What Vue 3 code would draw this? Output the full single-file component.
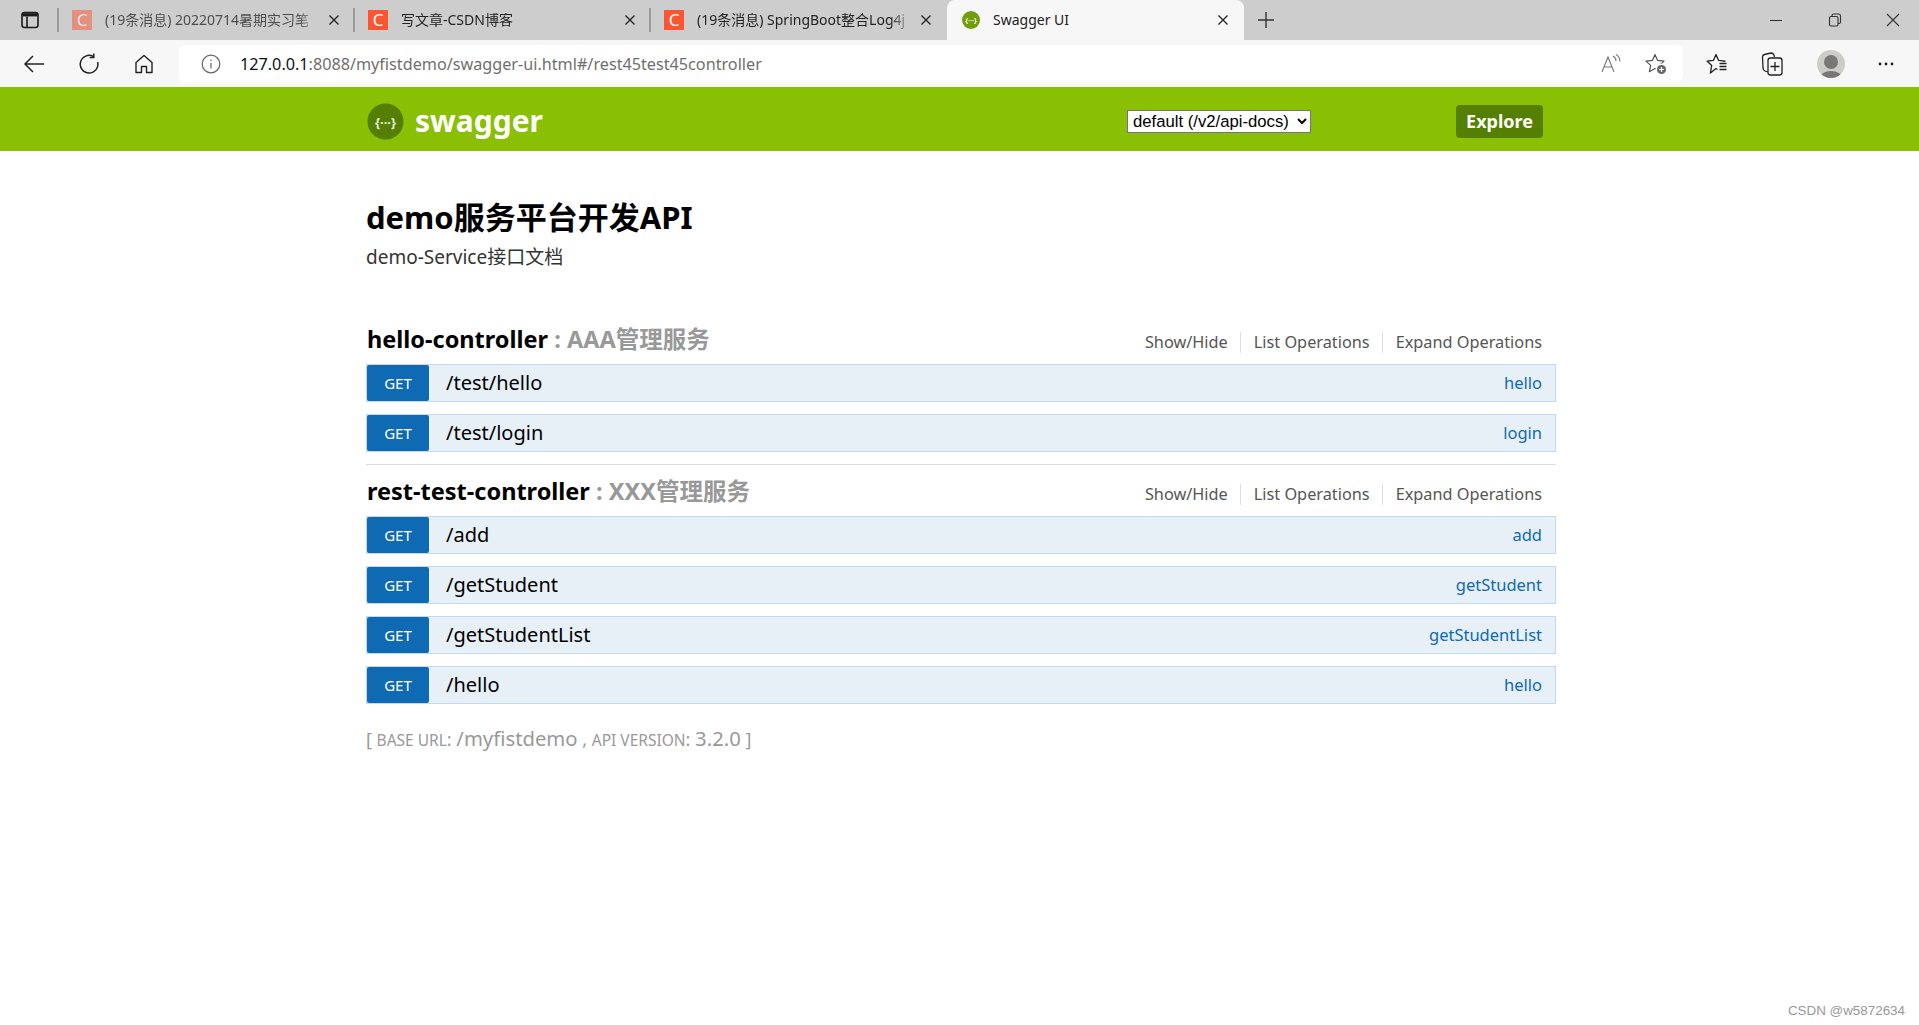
<script setup>
const oldTabs = [
  { title: '(19条消息) 20220714暑期实习笔', dim: true },
  { title: '写文章-CSDN博客', dim: false },
  { title: '(19条消息) SpringBoot整合Log4j', dim: false }
]

const groups = [
  {
    name: 'hello-controller',
    desc: 'AAA管理服务',
    ops: [
      { path: '/test/hello', nick: 'hello' },
      { path: '/test/login', nick: 'login' }
    ]
  },
  {
    name: 'rest-test-controller',
    desc: 'XXX管理服务',
    ops: [
      { path: '/add', nick: 'add' },
      { path: '/getStudent', nick: 'getStudent' },
      { path: '/getStudentList', nick: 'getStudentList' },
      { path: '/hello', nick: 'hello' }
    ]
  }
]
</script>

<template>
  <div class="page">
    <div class="tabstrip">
      <div class="strip-btn">
        <svg width="18" height="18" viewBox="0 0 18 18" fill="none" stroke="#1a1a1a" stroke-width="1.6">
          <rect x="1" y="1.5" width="16" height="15" rx="2.5" />
          <path d="M6 5.5v11" />
          <path d="M1.5 3.8h15" stroke-width="3.2" />
        </svg>
      </div>
      <div v-for="tab in oldTabs" :key="tab.title" class="tab">
        <span class="fav" :class="{ faded: tab.dim }">C</span>
        <span class="tab-title" :class="{ faded: tab.dim }">{{ tab.title }}</span>
        <svg class="tab-x" width="12" height="12" viewBox="0 0 12 12" stroke="#222" stroke-width="1.3"><path d="M1.5 1.5l9 9M10.5 1.5l-9 9" /></svg>
      </div>
      <div class="tab active">
        <svg class="fav-sw" width="18" height="18" viewBox="0 0 18 18">
          <circle cx="9" cy="9" r="9" fill="#6f9e0a" />
          <text x="9" y="12" text-anchor="middle" class="fav-sw-text">{···}</text>
        </svg>
        <span class="tab-title">Swagger UI</span>
        <svg class="tab-x" width="12" height="12" viewBox="0 0 12 12" stroke="#222" stroke-width="1.3"><path d="M1.5 1.5l9 9M10.5 1.5l-9 9" /></svg>
      </div>
      <div class="plus">
        <svg width="18" height="18" viewBox="0 0 18 18" stroke="#333" stroke-width="1.4"><path d="M9 1v16M1 9h16" /></svg>
      </div>
      <div class="winctl">
        <svg width="14" height="14" viewBox="0 0 14 14" stroke="#333" stroke-width="1.1"><path d="M1 7.5h12" /></svg>
        <svg width="14" height="14" viewBox="0 0 14 14" fill="none" stroke="#333" stroke-width="1.1"><rect x="1.5" y="3.5" width="8.5" height="9.5" rx="1.5" /><path d="M4 3.5V2.5a1.5 1.5 0 0 1 1.5-1.5h5a2 2 0 0 1 2 2v6a1.5 1.5 0 0 1-1.5 1.5H10" /></svg>
        <svg width="14" height="14" viewBox="0 0 14 14" stroke="#333" stroke-width="1.1"><path d="M1 1l12 12M13 1L1 13" /></svg>
      </div>
    </div>

    <div class="toolbar">
      <div class="nav-btn first">
        <svg width="22" height="20" viewBox="0 0 22 20" fill="none" stroke="#222" stroke-width="1.5"><path d="M21 10H2M10 2l-8 8 8 8" /></svg>
      </div>
      <div class="nav-btn">
        <svg width="22" height="22" viewBox="0 0 22 22" fill="none" stroke="#222" stroke-width="1.5"><path d="M15.5 3.6A8.8 8.8 0 1 0 19.6 9" /><path d="M15.8 0.5v4h-4.2" /></svg>
      </div>
      <div class="nav-btn">
        <svg width="20" height="20" viewBox="0 0 20 20" fill="none" stroke="#222" stroke-width="1.4"><path d="M2 8.5L10 1.5l8 7V18.5h-5.5v-6h-5v6H2z" stroke-linejoin="round" /></svg>
      </div>
      <div class="address">
        <svg class="info" width="20" height="20" viewBox="0 0 20 20" fill="none" stroke="#666" stroke-width="1.2"><circle cx="10" cy="10" r="8.8" /><path d="M10 9v5.5M10 5.5v1.6" /></svg>
        <span class="url"><b>127.0.0.1</b>:8088/myfistdemo/swagger-ui.html#/rest45test45controller</span>
        <svg class="read" width="22" height="20" viewBox="0 0 22 20" fill="none" stroke="#777" stroke-width="1.1"><path d="M1 18L7 3l6 15M3 13h8" /><path d="M12 2c2 1 3 3 3 5M15 0.5c2.5 1.5 4 4 4 7" /></svg>
        <svg class="star-add" width="22" height="22" viewBox="0 0 22 22" fill="none" stroke="#555" stroke-width="1.2">
          <path d="M10 1.5L12.6 7.4L19 8.1L14.3 12.4L15.6 18.7L10 15.5L4.4 18.7L5.7 12.4L1 8.100L7.400 7.400Z" stroke-linejoin="round" />
          <circle cx="16.500" cy="16.500" r="6" fill="#fff" stroke="none" />
          <circle cx="16.500" cy="16.500" r="4.500" fill="#666" stroke="none" />
          <path d="M16.500 14v5M14 16.500h5" stroke="#fff" />
        </svg>
      </div>
      <div class="tool-icons">
        <svg width="22" height="22" viewBox="0 0 22 22" fill="none" stroke="#222" stroke-width="1.3">
          <path d="M10 1.500L12.600 7.400L19 8.100L14.300 12.400L15.600 18.700L10 15.500L4.400 20L5.700 12.400L1 8.100L7.400 7.400Z" stroke-linejoin="round" />
          <rect x="11.500" y="9" width="10" height="13" fill="#f7f7f7" stroke="none" />
          <path d="M13.500 10.500h7M13.500 13.500h7M13.500 16.500h7" />
        </svg>
        <svg width="22" height="24" viewBox="0 0 22 24" fill="none" stroke="#222" stroke-width="1.3"><path d="M7 20L4 19Q2 18 2 16L1.500 5Q1.500 3 3.500 2.500L10 1Q12 1 13 3L13.500 5" /><rect x="7" y="6" width="14" height="17" rx="2.500" /><path d="M14 10v9M9.500 14.500h9" /></svg>
        <div class="avatar">
          <svg width="28" height="34" viewBox="0 0 28 34"><circle cx="14" cy="12" r="7" fill="#777" /><ellipse cx="14" cy="28" rx="11" ry="7" fill="#777" /></svg>
        </div>
        <svg width="16" height="4" viewBox="0 0 16 4" fill="#222"><circle cx="2" cy="2" r="1.400" /><circle cx="8" cy="2" r="1.400" /><circle cx="14" cy="2" r="1.400" /></svg>
      </div>
    </div>

    <header class="sw-header">
      <div class="sw-inner">
        <svg class="sw-logo" width="37" height="37" viewBox="0 0 37 37">
          <circle cx="18.500" cy="18.500" r="18" fill="#547f00" />
          <text x="18.500" y="24" text-anchor="middle" class="sw-logo-text">{···}</text>
        </svg>
        <span class="sw-name">swagger</span>
        <select class="sw-select">
          <option>default (/v2/api-docs)</option>
        </select>
        <button class="sw-explore" type="button">Explore</button>
      </div>
    </header>

    <main class="content">
      <h1 class="api-title">demo服务平台开发API</h1>
      <p class="api-desc">demo-Service接口文档</p>

      <section v-for="(g, i) in groups" :key="g.name" class="group" :class="{ divided: i > 0 }">
        <div class="group-head">
          <h2 class="group-name">{{ g.name }}<span class="group-desc"> : {{ g.desc }}</span></h2>
          <ul class="group-links">
            <li>Show/Hide</li>
            <li>List Operations</li>
            <li>Expand Operations</li>
          </ul>
        </div>
        <div v-for="op in g.ops" :key="op.path" class="op">
          <span class="method">GET</span>
          <span class="path">{{ op.path }}</span>
          <span class="nick">{{ op.nick }}</span>
        </div>
      </section>

      <p class="base">[ <span class="small">BASE URL</span>: <span class="big">/myfistdemo</span> , <span class="small">API VERSION</span>: <span class="big">3.2.0</span> ]</p>
    </main>

    <div class="mark">CSDN @w5872634</div>
  </div>
</template>

<style>
html, body {
  margin: 0;
  background: #fff;
}
</style>

<style scoped>
.page {
  width: 1919px;
  height: 1025px;
  overflow: hidden;
  display: flex;
  flex-direction: column;
  font-family: "Noto Sans", "Noto Sans CJK SC", sans-serif;
  position: relative;
}

/* browser chrome */
.tabstrip {
  height: 40px;
  background: #cdcdcd;
  display: flex;
  align-items: stretch;
  flex-shrink: 0;
}
.strip-btn {
  width: 57px;
  display: flex;
  align-items: center;
  padding-left: 21px;
  box-sizing: border-box;
}
.tab {
  width: 296px;
  box-sizing: border-box;
  display: flex;
  align-items: center;
  padding: 0 13px 0 15px;
  background-image: linear-gradient(#9a9a9a, #9a9a9a);
  background-size: 2px 24px;
  background-position: 0 8px;
  background-repeat: no-repeat;
  font-size: 14px;
  line-height: 18px;
  color: #222;
}
.tab.active {
  width: 297px;
  margin-left: 2px;
  background: #f7f7f7;
  border-radius: 8px 8px 0 0;
  padding: 0 15px;
}
.fav {
  width: 20px;
  height: 20px;
  background: #fc5531;
  color: #fff;
  font-size: 17px;
  line-height: 20px;
  text-align: center;
  flex-shrink: 0;
  margin-right: 13px;
}
.fav.faded {
  opacity: 0.5;
}
.fav-sw {
  flex-shrink: 0;
  margin-right: 13px;
}
.fav-sw-text {
  font-size: 7px;
  font-weight: 700;
  fill: #fff;
}
.tab-title {
  flex: 1;
  overflow: hidden;
  white-space: nowrap;
  -webkit-mask-image: linear-gradient(to right, #000 90%, transparent);
  mask-image: linear-gradient(to right, #000 90%, transparent);
}
.tab-title.faded {
  opacity: 0.75;
}
.active .tab-title {
  -webkit-mask-image: none;
  mask-image: none;
}
.tab-x {
  flex-shrink: 0;
  margin-left: 8px;
}
.plus {
  width: 42px;
  margin-left: 1px;
  display: flex;
  align-items: center;
  justify-content: center;
}
.winctl {
  margin-left: auto;
  width: 150px;
  padding-right: 19px;
  box-sizing: border-box;
  display: flex;
  align-items: center;
  justify-content: space-between;
}
.toolbar {
  height: 47px;
  background: #f7f7f7;
  display: flex;
  align-items: center;
  flex-shrink: 0;
}
.nav-btn {
  width: 55px;
  display: flex;
  justify-content: center;
}
.nav-btn.first {
  width: 34px;
  margin-left: 17px;
  margin-right: 10px;
}
.address {
  margin-left: 8px;
  width: 1504px;
  height: 37px;
  background: #fff;
  border-radius: 6px;
  display: flex;
  align-items: center;
  box-sizing: border-box;
  padding: 0 16px 0 22px;
}
.info {
  margin-right: 19px;
  flex-shrink: 0;
}
.url {
  flex: 1;
  font-size: 16.200px;
  color: #6f6f6f;
  white-space: nowrap;
}
.url b {
  font-weight: 400;
  color: #111;
}
.read {
  margin-right: 22px;
}
.tool-icons {
  flex: 1;
  display: flex;
  align-items: center;
  justify-content: space-between;
  padding: 0 25px 0 23px;
}
.avatar {
  width: 28px;
  height: 28px;
  border-radius: 50%;
  background: #cdcbc8;
  overflow: hidden;
}
.avatar svg {
  display: block;
}

/* swagger header */
.sw-header {
  height: 64px;
  background: #89bf04;
  flex-shrink: 0;
}
.sw-inner {
  height: 100%;
  box-sizing: border-box;
  padding: 4px 0 0 367px;
  width: 1543px;
  display: flex;
  align-items: center;
}
.sw-name {
  margin-left: 11px;
  color: #fff;
  font-size: 30px;
  font-weight: 700;
  line-height: 1;
}
.sw-logo-text {
  font-size: 13px;
  font-weight: 700;
  fill: #e8f0d8;
}
.sw-select {
  margin-left: auto;
  margin-right: 145px;
  width: 184px;
  height: 23px;
  font-family: "Liberation Sans", sans-serif;
  font-size: 16.700px;
  background: #fff;
  color: #000;
  border: 1px solid #767676;
  padding: 0 0 0 1px;
}
.sw-explore {
  width: 87px;
  height: 33px;
  border: 0;
  border-radius: 4px;
  background: #547f00;
  color: #fff;
  font-family: inherit;
  font-size: 18px;
  font-weight: 700;
  padding: 0;
}

/* content */
.content {
  width: 1190px;
  margin-left: 366px;
  padding-top: 43px;
}
.api-title {
  margin: 0;
  font-size: 31px;
  line-height: 46px;
  font-weight: 700;
  color: #000;
}
.api-desc {
  margin: 4px 0 0;
  font-size: 19px;
  line-height: 26px;
  color: #333;
}
.group {
  margin-top: 14px;
  padding-top: 40px;
}
.group.divided {
  margin-top: 12px;
  border-top: 1px solid #ddd;
  padding-top: 11px;
}
.group-head {
  height: 40px;
  display: flex;
  align-items: flex-start;
  justify-content: space-between;
  padding: 0 14px 0 1px;
}
.group-name {
  margin: -2px 0 0;
  font-size: 23.500px;
  line-height: 34px;
  font-weight: 700;
  color: #000;
}
.group-desc {
  color: #999;
}
.group-links {
  list-style: none;
  display: flex;
  margin: 8px 0 0;
  padding: 0;
  font-size: 16.300px;
  line-height: 21px;
  color: #555;
}
.group-links li {
  padding: 0 12px 0 13px;
  border-right: 1px solid #ddd;
}
.group-links li:last-child {
  padding-right: 0;
  border-right: 0;
}
.op {
  height: 38px;
  box-sizing: border-box;
  margin-bottom: 12px;
  background: #e7f0f7;
  border: 1px solid #c3d9ec;
  display: flex;
  align-items: center;
  padding-right: 13px;
}
.op:last-child {
  margin-bottom: 0;
}
.method {
  width: 62px;
  height: 36px;
  background: #0f6ab4;
  border-radius: 2px;
  color: #fff;
  font-size: 15px;
  line-height: 36px;
  text-align: center;
  flex-shrink: 0;
}
.path {
  margin-left: 17px;
  padding-bottom: 2px;
  font-size: 20px;
  color: #000;
}
.nick {
  margin-left: auto;
  padding-bottom: 2px;
  font-size: 16.500px;
  color: #0f6ab4;
}
.base {
  margin: 18px 0 0;
  font-size: 18px;
  line-height: 32px;
  color: #999;
}
.base .small {
  font-size: 15.500px;
  font-variant: small-caps;
}
.base .big {
  font-size: 20.300px;
}
.mark {
  position: absolute;
  right: 14px;
  bottom: 7px;
  font-family: "Liberation Sans", sans-serif;
  font-size: 13.400px;
  color: #999;
}
</style>
